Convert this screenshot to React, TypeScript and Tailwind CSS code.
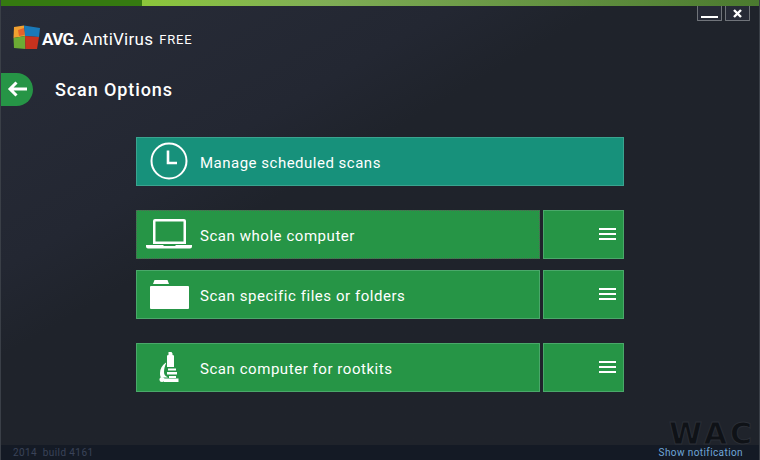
import { FC, ReactNode } from "react";

const Clock = () => (
  <svg width="38" height="38" viewBox="0 0 38 38" fill="none" stroke="#fff">
    <circle cx="19" cy="19" r="17.500" strokeWidth="2" />
    <path d="M18 8.500V21H27" strokeWidth="2.600" />
  </svg>
);

const Laptop = () => (
  <svg width="46" height="30" viewBox="0 0 46 30" fill="#fff">
    <path fillRule="evenodd" d="M9 0h29a2 2 0 0 1 2 2v23H7V2a2 2 0 0 1 2-2zm.500 2.500v20h28v-20z" />
    <path d="M0 26h17l1 1h11l1-1h16v1.500a2 2 0 0 1-2 2H2a2 2 0 0 1-2-2z" />
  </svg>
);

const Folder = () => (
  <svg width="39" height="29" viewBox="0 0 39 29" fill="#fff">
    <path d="M3 4 4.500 0h13L19 4z" />
    <path d="M1 6h37a1 1 0 0 1 1 1v21a1 1 0 0 1-1 1H1a1 1 0 0 1-1-1V7a1 1 0 0 1 1-1z" />
  </svg>
);

const Microscope = () => (
  <svg width="20" height="30" viewBox="0 0 20 30" fill="#fff">
    <path d="M9.500 0h3l1 1.500V3l1.500.5V15H8V3.500l1.500-.5z" />
    <path d="M7 6.500v4C3 13 1 17 1 21c0 2 .3 3.500 1 4.500h7C6 24 5 22.500 5 20c0-3.500 1-6.500 2-8.500z" />
    <path d="M9 16.500h8v2H9zM8 20h10v2.500H8zM10 24h7v2h-7z" />
    <circle cx="3" cy="27.500" r="2.500" />
    <path d="M5 26.500h14.500V30H5z" />
  </svg>
);

const Logo = () => (
  <svg width="28" height="26" viewBox="0 0 28 26">
    <path d="M1 2 11 0.500 12 11 0.500 13z" fill="#f0a030" />
    <path d="M11 0.500 27 3 26 12 12 11z" fill="#1a79b8" />
    <path d="M0.500 13 12 11 12.500 24 1 23z" fill="#6cab34" />
    <path d="M12 11 26 12 24 24 12.500 24z" fill="#c8321e" />
    <path d="M5 5 11 3 11.500 10 6 11z" fill="#e4622a" />
  </svg>
);

interface RowProps {
  icon: ReactNode;
  label: string;
  focused?: boolean;
}

const ScanRow: FC<RowProps> = ({ icon, label, focused }) => (
  <div className="flex h-[49px] w-full gap-[3px]">
    <div
      className={`flex h-full w-[404px] items-center bg-[#269546] border ${
        focused ? "border-dotted border-[#5a5f5a]" : "border-[#4aa86a]"
      }`}
    >
      <div className="flex w-[63px] justify-center pl-[1px]">{icon}</div>
      <span className="pt-[5px] text-[15px] tracking-[0.55px] text-white">{label}</span>
    </div>
    <div className="flex h-full flex-1 items-center justify-end border border-[#4aa86a] bg-[#269546] pr-[7px]">
      <div className="flex flex-col gap-[3px] pb-[1px]">
        <div className="h-[2px] w-[17px] bg-white" />
        <div className="h-[2px] w-[17px] bg-white" />
        <div className="h-[2px] w-[17px] bg-white" />
      </div>
    </div>
  </div>
);

export default function App() {
  return (
    <div className="relative flex h-[460px] w-[760px] flex-col overflow-hidden border-x border-[#3a3f47] bg-[#1f232b] font-['Roboto',sans-serif]">
      <div className="flex h-[6px] w-full shrink-0">
        <div className="h-full w-[141px] bg-[#357a10]" />
        <div className="h-full flex-1 bg-gradient-to-r from-[#8cc63a] via-[#7fad55] via-30% to-[#4b7a2f]" />
      </div>

      <div className="absolute right-[9px] top-[6px] flex gap-[3px]">
        <div className="flex h-[15px] w-[25px] items-end justify-center rounded-b-[1px] border border-t-0 border-[#70747a] bg-[#262a36] pb-[2px]">
          <div className="h-[2px] w-[17px] bg-white" />
        </div>
        <div className="flex h-[15px] w-[25px] items-center justify-center rounded-b-[1px] border border-t-0 border-[#70747a] bg-[#262a36]">
          <svg width="9" height="9" viewBox="0 0 9 9" stroke="#fff" strokeWidth="2.400">
            <path d="M1 1 8 8M8 1 1 8" />
          </svg>
        </div>
      </div>

      <div className="flex flex-1 flex-col bg-gradient-to-br from-[#282c38] via-[#232732] via-30% to-[#1f232b] to-40%">
        <div className="mt-[18px] flex items-center pl-[12px]">
          <Logo />
          <span className="ml-[1px] mt-[3px] text-[17px] font-bold tracking-[-0.6px] text-white">AVG.</span>
          <span className="ml-[4px] mt-[3px] text-[17px] tracking-[0.25px] text-white">AntiVirus</span>
          <span className="ml-[6px] mt-[3px] text-[13px] tracking-[0.8px] text-white">FREE</span>
        </div>

        <div className="mt-[20px] flex items-center">
          <div className="flex h-[33px] w-[32px] items-center justify-start rounded-r-full bg-[#269546] pl-[6px]">
            <svg width="20" height="16" viewBox="0 0 20 16" fill="none" stroke="#fff" strokeWidth="3">
              <path d="M20 8H3M9.500 1.500 3 8l6.500 6.500" />
            </svg>
          </div>
          <h1 className="ml-[22px] text-[18px] font-medium tracking-[0.9px] text-white">Scan Options</h1>
        </div>

        <div className="ml-[135px] mt-[31px] flex w-[488px] flex-col">
          <div className="flex h-[49px] w-full items-center border border-[#3aa48f] bg-[#17917b]">
            <div className="flex w-[63px] justify-center pl-[1px]">
              <Clock />
            </div>
            <span className="pt-[5px] text-[15px] tracking-[0.5px] text-white">Manage scheduled scans</span>
          </div>
          <div className="mt-[24px]">
            <ScanRow icon={<Laptop />} label="Scan whole computer" focused />
          </div>
          <div className="mt-[11px]">
            <ScanRow icon={<Folder />} label="Scan specific files or folders" />
          </div>
          <div className="mt-[24px]">
            <ScanRow icon={<Microscope />} label="Scan computer for rootkits" />
          </div>
        </div>
      </div>

      <span className="absolute bottom-[15px] right-[4px] h-[22px] font-['DejaVu_Sans',sans-serif] text-[30px] font-bold leading-[22px] tracking-[3px] text-[#0f1217] [-webkit-text-stroke:1px_#2a2e36]">
        WAC
      </span>

      <div className="flex h-[15px] shrink-0 items-center justify-between bg-[#141a25] pl-[12px] pr-[16px] text-[10px] tracking-[0.4px]">
        <span className="text-[#3a4358]">2014&nbsp; build 4161</span>
        <span className="text-[#6fa6d8]">Show notification</span>
      </div>
    </div>
  );
}
